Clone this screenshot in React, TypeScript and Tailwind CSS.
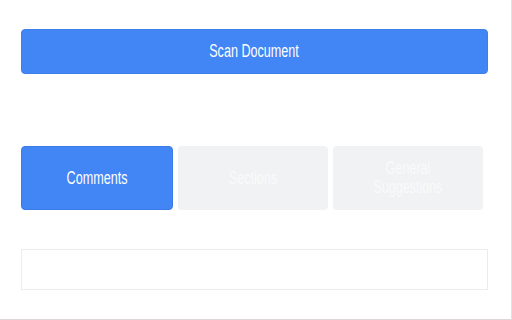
export default function App() {
  const tabs = [
    { label: "Comments", active: true },
    { label: "Sections", active: false },
    { label: "General Suggestions", active: false },
  ];

  return (
    <div
      className="w-[512px] h-[320px] bg-white border-r border-b border-r-[#eadfe0] border-b-[#ddd6d8] flex flex-col pl-[21px] pr-[23px]"
      style={{ fontFamily: '"Liberation Sans", Arial, sans-serif' }}
    >
      <button className="mt-[29px] h-[45px] w-full rounded-[4px] bg-[#4285f4] border border-[#3f7fe9] text-white text-[18px] flex items-center justify-center">
        <span className="inline-block scale-x-[0.7]">Scan Document</span>
      </button>

      <div className="mt-[72px] flex gap-[5px] pr-[5px]">
        {tabs.map((t) => (
          <div
            key={t.label}
            className={
              t.active
                ? "flex-1 h-[64px] rounded-[4px] bg-[#4285f4] border border-[#3a7be6] text-white text-[18px] flex items-center justify-center"
                : "flex-1 h-[64px] rounded-[4px] bg-[#f1f2f4] text-[#fafafa] text-[18px] leading-[19px] flex items-center justify-center"
            }
          >
            <span className="inline-block scale-x-[0.7] w-[120px] text-center">{t.label}</span>
          </div>
        ))}
      </div>

      <div className="mt-[39px] h-[41px] w-full border border-[#ececec]" />
    </div>
  );
}
